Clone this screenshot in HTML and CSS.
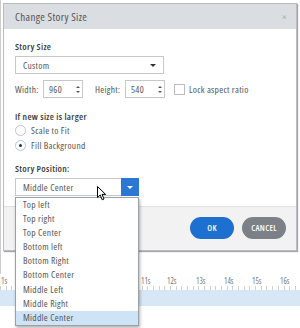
FILE: index.html
```html
<!DOCTYPE html>
<html>
<head>
<meta charset="utf-8">
<link rel="stylesheet" href="styles.css">
</head>
<body>
<div class="app">
  <div class="app-top"></div>
  <div class="ruler">
    <span class="tick-label">1s</span>
    <span class="tick-label">11s</span>
    <span class="tick-label">12s</span>
    <span class="tick-label">13s</span>
    <span class="tick-label">14s</span>
    <span class="tick-label">15s</span>
    <span class="tick-label">16s</span>
  </div>
  <div class="ticks"></div>
  <div class="band"></div>
</div>

<div class="dialog">
  <div class="dialog-header">
    <span class="title">Change Story Size</span>
    <span class="close">×</span>
  </div>
  <div class="dialog-body">
    <div class="label label-size">Story Size</div>
    <div class="select select-size">
      <span>Custom</span>
      <span class="caret-dark"></span>
    </div>
    <div class="dims">
      <span class="dim-label">Width:</span>
      <div class="num"><span>960</span><span class="spin"><i class="up"></i><i class="down"></i></span></div>
      <span class="dim-label dim-h">Height:</span>
      <div class="num"><span>540</span><span class="spin"><i class="up"></i><i class="down"></i></span></div>
      <span class="checkbox"></span>
      <span class="check-text">Lock aspect ratio</span>
    </div>
    <div class="label label-larger">If new size is larger</div>
    <div class="radio-row"><span class="radio"></span><span>Scale to Fit</span></div>
    <div class="radio-row"><span class="radio checked"></span><span>Fill Background</span></div>
    <div class="label label-pos">Story Position:</div>
    <div class="select select-pos">
      <span>Middle Center</span>
      <span class="blue-btn"><span class="caret-white"></span></span>
    </div>
  </div>
  <div class="dialog-footer">
    <button class="btn btn-ok">OK</button>
    <button class="btn btn-cancel">CANCEL</button>
  </div>
</div>

<ul class="dropdown">
  <li>Top left</li>
  <li>Top right</li>
  <li>Top Center</li>
  <li>Bottom left</li>
  <li>Bottom Right</li>
  <li>Bottom Center</li>
  <li>Middle Left</li>
  <li>Middle Right</li>
  <li class="selected">Middle Center</li>
</ul>

<svg class="cursor" width="10" height="15" viewBox="0 0 10 15">
  <path d="M0.5 0.5 L0.5 11.5 L3.2 9 L5.2 13.8 L7 13 L5 8.4 L8.6 8.4 Z" fill="#fff" stroke="#000" stroke-width="1" stroke-linejoin="round"/>
</svg>
</body>
</html>
```

FILE: styles.css
```css
* { box-sizing: border-box; }
html, body { margin: 0; padding: 0; }
body {
  width: 300px;
  height: 328px;
  overflow: hidden;
  position: relative;
  background: #fff;
  font-family: "Open Sans", "Noto Sans", sans-serif;
  font-stretch: 80%;
  font-size: 9.5px;
  letter-spacing: 0.3px;
  color: #4a4a4a;
}

/* background app */
.app { display: flex; flex-direction: column; }
.app-top { height: 274px; border-left: 1px solid #ccc; }
.ruler { position: relative; height: 12px; font-size: 8px; letter-spacing: 0; color: #777; }
.tick-label { position: absolute; top: 1px; }
.tick-label:nth-child(1) { left: 1px; }
.tick-label:nth-child(2) { left: 141px; }
.tick-label:nth-child(3) { left: 167px; }
.tick-label:nth-child(4) { left: 196px; }
.tick-label:nth-child(5) { left: 224px; }
.tick-label:nth-child(6) { left: 252px; }
.tick-label:nth-child(7) { left: 280px; }
.ticks {
  height: 4px;
  background: repeating-linear-gradient(90deg, #bbb 0 1px, transparent 1px 5.67px);
  opacity: 0.7;
}
.band { height: 16px; background: #d7e7f6; }

/* dialog */
.dialog {
  position: absolute;
  left: 3px;
  top: 3px;
  width: 294px;
  height: 248px;
  background: #fff;
  border: 1px solid #b8bcc2;
  box-shadow: 1px 1px 1px rgba(0,0,0,0.35);
  display: flex;
  flex-direction: column;
}
.dialog-header {
  height: 25px;
  flex: none;
  background: #dadde2;
  display: flex;
  align-items: center;
  justify-content: space-between;
  padding: 0 9px 0 11px;
}
.title { font-size: 11px; letter-spacing: 0.35px; color: #555; }
.close { font-size: 11px; color: #aaa; }

.dialog-body {
  flex: 1;
  padding: 0 11px;
  display: flex;
  flex-direction: column;
}
.label { font-weight: 600; color: #3a3a3a; line-height: 12px; }
.label-size { margin-top: 12px; }
.select {
  height: 18px;
  border: 1px solid #c8c8c8;
  display: flex;
  align-items: center;
  justify-content: space-between;
  padding-left: 7px;
  color: #555;
}
.select-size { width: 149px; margin-top: 3px; padding-right: 7px; }
.caret-dark {
  width: 0; height: 0;
  border-left: 3px solid transparent;
  border-right: 3px solid transparent;
  border-top: 3px solid #333;
}
.dims { display: flex; align-items: center; margin-top: 6px; height: 18px; }
.dim-label { color: #555; width: 28px; }
.dim-h { margin-left: 12px; width: 30px; }
.num {
  width: 40px; height: 18px;
  border: 1px solid #c8c8c8;
  display: flex; align-items: center; justify-content: space-between;
  padding-left: 5px; padding-right: 2px; color: #555;
}
.spin { display: flex; flex-direction: column; gap: 3px; }
.spin i { display: block; width: 0; height: 0; border-left: 2px solid transparent; border-right: 2px solid transparent; }
.spin .up { border-bottom: 2px solid #555; }
.spin .down { border-top: 2px solid #555; }
.checkbox {
  width: 11px; height: 11px;
  border: 1px solid #bbb;
  margin-left: 9px;
  background: #fff;
}
.check-text { margin-left: 4px; color: #555; }

.label-larger { margin-top: 13px; }
.radio-row { display: flex; align-items: center; height: 15px; color: #555; }
.radio {
  width: 11px; height: 11px;
  border: 1px solid #c4c4c4;
  border-radius: 50%;
  margin-right: 5px;
  display: flex; align-items: center; justify-content: center;
}
.radio.checked { border-color: #a9c8e6; }
.radio.checked::after {
  content: ""; width: 3px; height: 3px; border-radius: 50%; background: #333;
}
.label-pos { margin-top: 10px; }
.select-pos { width: 124px; margin-top: 3px; padding-right: 0; }
.blue-btn {
  width: 18px; height: 18px; margin-right: -1px;
  background: #2a78d4;
  display: flex; align-items: center; justify-content: center;
}
.caret-white {
  width: 0; height: 0;
  border-left: 3px solid transparent;
  border-right: 3px solid transparent;
  border-top: 3px solid #fff;
}

.dialog-footer {
  height: 44px;
  flex: none;
  background: #f2f2f2;
  border-top: 1px solid #e2e2e2;
  display: flex;
  align-items: center;
  justify-content: flex-end;
  gap: 8px;
  padding-right: 10px;
  padding-bottom: 2px;
}
.btn {
  height: 22px;
  width: 44px;
  border: none;
  border-radius: 11px;
  color: #fff;
  font-family: "Open Sans", "Noto Sans", sans-serif;
  font-stretch: 80%;
  font-size: 8.5px;
  letter-spacing: 0.3px;
  font-weight: 600;
  padding: 0;
}
.btn-ok { background: #1d6fd0; }
.btn-cancel { background: #7c8087; }

/* dropdown */
.dropdown {
  position: absolute;
  left: 15px;
  top: 197px;
  width: 124px;
  margin: 0;
  padding: 0;
  list-style: none;
  background: #fff;
  border: 1px solid #9aa0a6;
  box-shadow: 1px 2px 3px rgba(0,0,0,0.3);
}
.dropdown li {
  height: 14.1px;
  line-height: 14px;
  padding-left: 7px;
  color: #555;
}
.dropdown li.selected { background: #cfe3f6; }

.cursor { position: absolute; left: 97px; top: 186px; }
```
